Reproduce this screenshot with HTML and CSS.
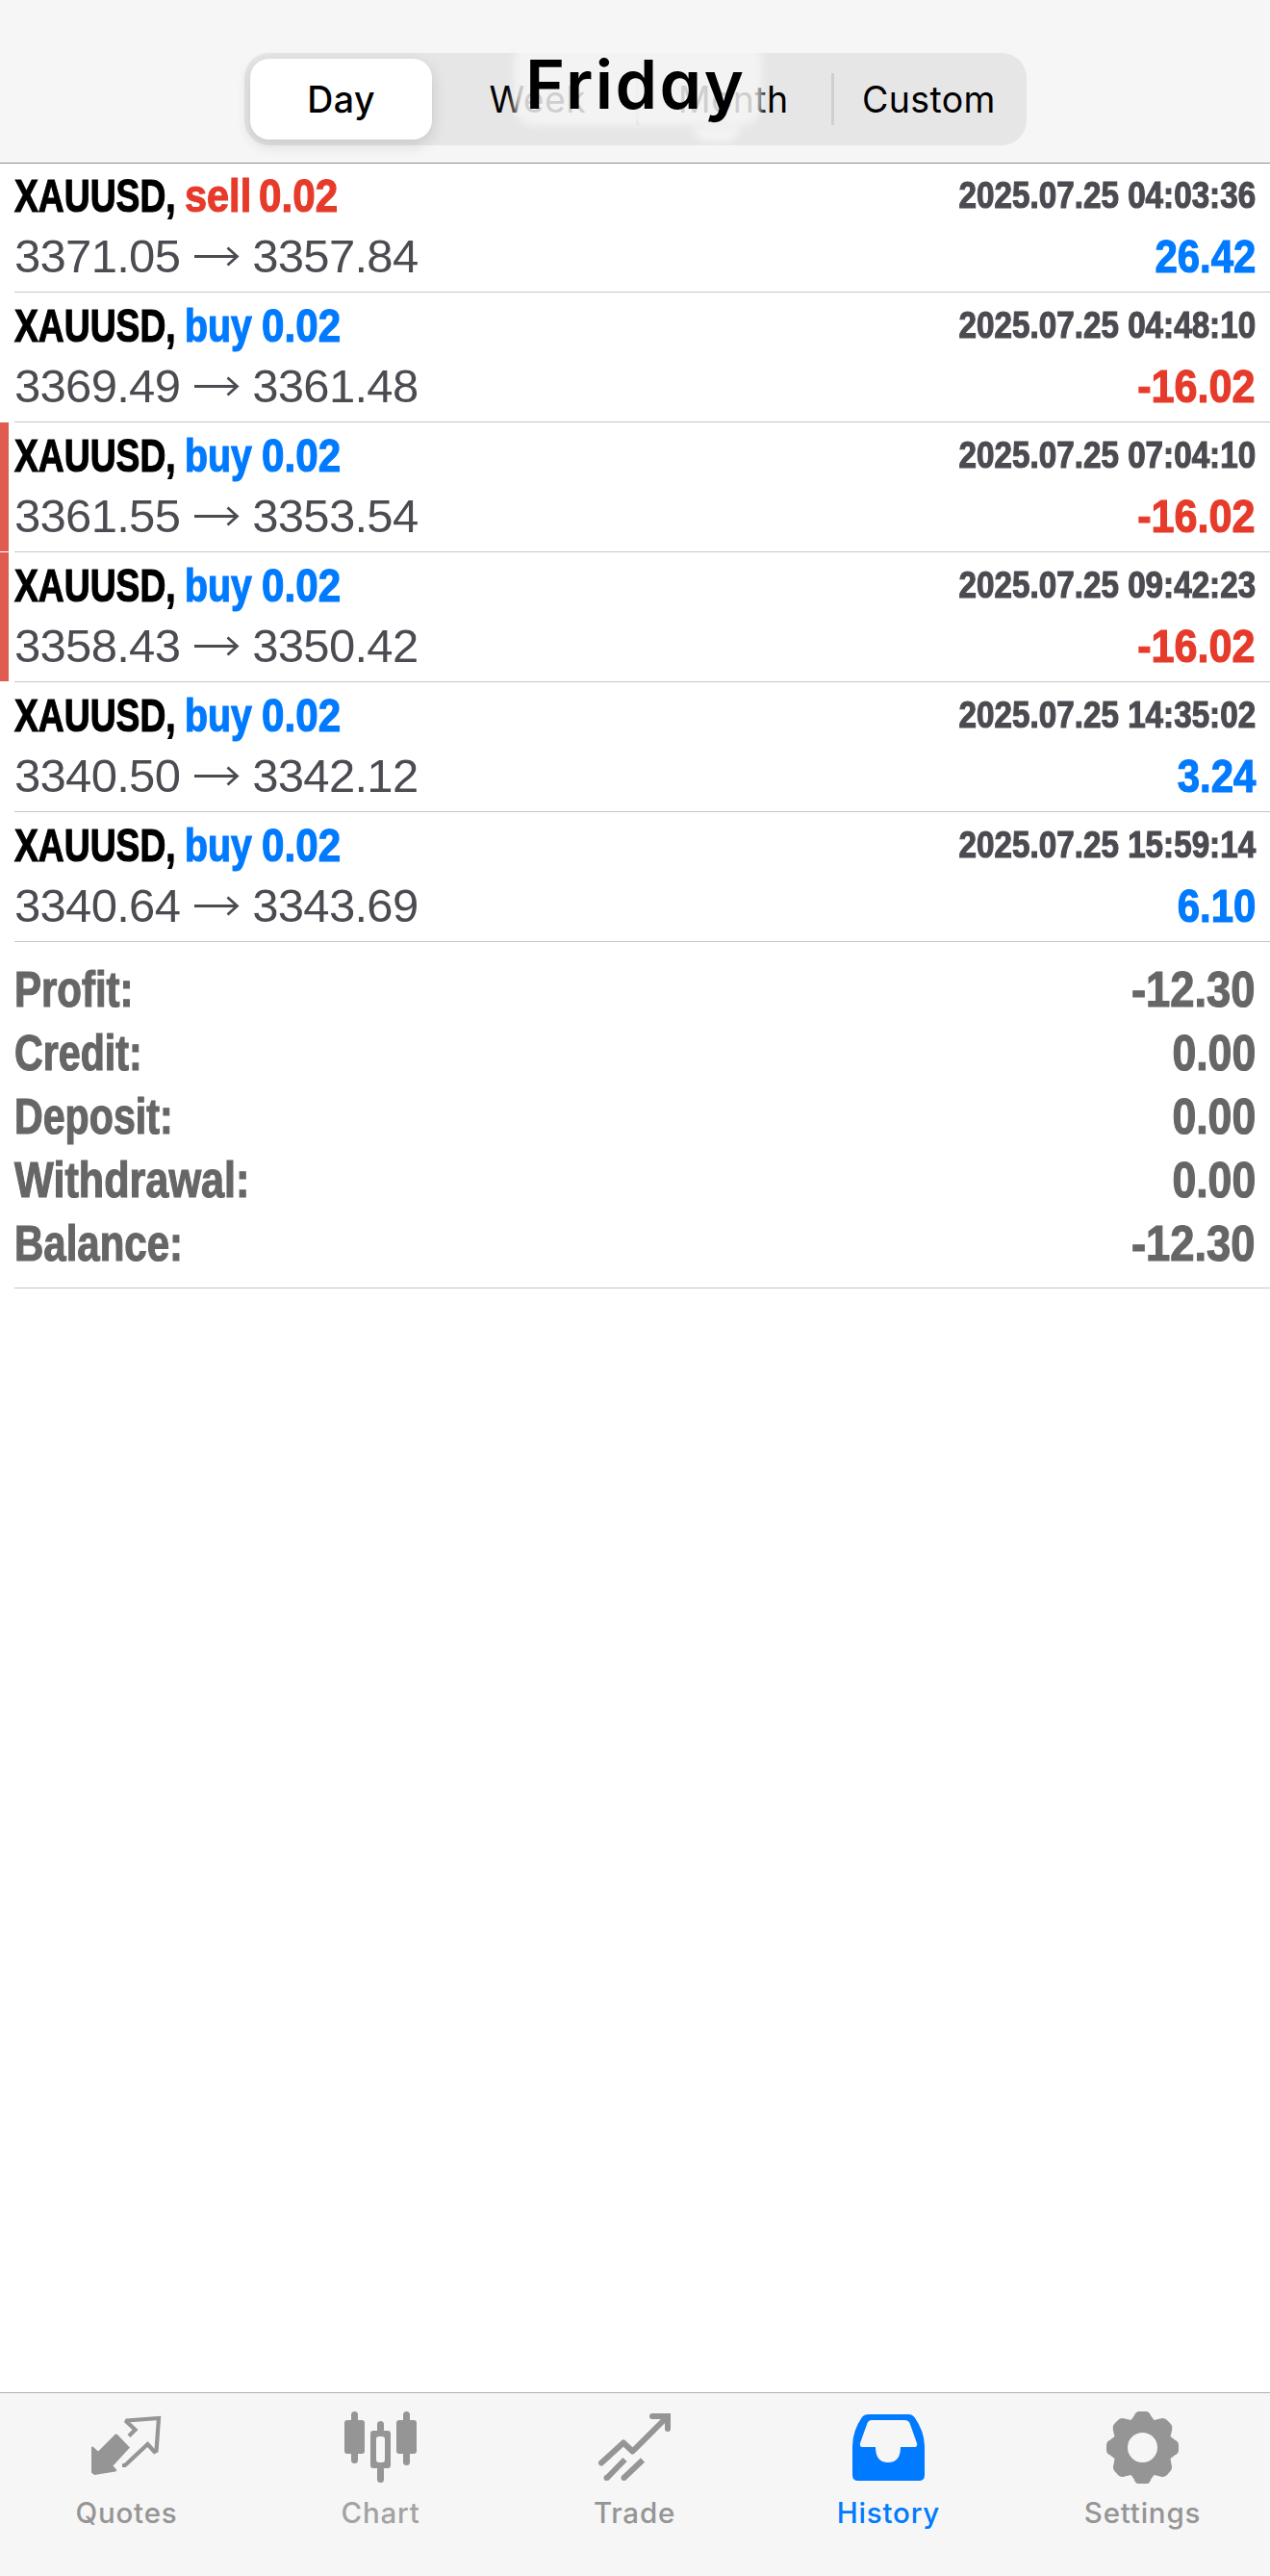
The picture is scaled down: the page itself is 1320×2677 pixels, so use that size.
FILE: index.html
```html
<!DOCTYPE html>
<html lang="en">
<head>
<meta charset="utf-8">
<title>History</title>
<link rel="stylesheet" href="styles.css">
</head>
<body>
<svg width="0" height="0" class="defs" aria-hidden="true">
  <symbol id="arrow" viewBox="0 0 48 24"><path d="M1 12.500H45M35.500 3.500L45.500 12.500L35.500 21.500" fill="none" stroke="currentColor" stroke-width="2.800"/></symbol>
</svg>
<div class="app">
  <header class="header">
    <nav class="segments">
      <span class="segment selected">Day</span>
      <span class="segment week">Week</span>
      <span class="segment divided month">Month</span>
      <span class="segment divided">Custom</span>
    </nav>
    <div class="halo"></div>
    <div class="halo halo-tail"></div>
    <h1 class="title">Friday</h1>
  </header>

  <main class="content">
    <section class="deals">
      <article class="deal">
        <div class="marker"></div>
        <div class="body">
          <div class="line top"><div class="name"><span class="symbol">XAUUSD,</span><span class="side sell">sell</span><span class="volume sell">0.02</span></div><time class="time">2025.07.25 04:03:36</time></div>
          <div class="line bottom"><div class="prices"><span>3371.05</span><svg class="arrow"><use href="#arrow"/></svg><span>3357.84</span></div><span class="result gain">26.42</span></div>
        </div>
      </article>
      <article class="deal">
        <div class="marker"></div>
        <div class="body">
          <div class="line top"><div class="name"><span class="symbol">XAUUSD,</span><span class="side buy">buy</span><span class="volume buy">0.02</span></div><time class="time">2025.07.25 04:48:10</time></div>
          <div class="line bottom"><div class="prices"><span>3369.49</span><svg class="arrow"><use href="#arrow"/></svg><span>3361.48</span></div><span class="result loss">-16.02</span></div>
        </div>
      </article>
      <article class="deal stopped">
        <div class="marker"></div>
        <div class="body">
          <div class="line top"><div class="name"><span class="symbol">XAUUSD,</span><span class="side buy">buy</span><span class="volume buy">0.02</span></div><time class="time">2025.07.25 07:04:10</time></div>
          <div class="line bottom"><div class="prices"><span>3361.55</span><svg class="arrow"><use href="#arrow"/></svg><span>3353.54</span></div><span class="result loss">-16.02</span></div>
        </div>
      </article>
      <article class="deal stopped">
        <div class="marker"></div>
        <div class="body">
          <div class="line top"><div class="name"><span class="symbol">XAUUSD,</span><span class="side buy">buy</span><span class="volume buy">0.02</span></div><time class="time">2025.07.25 09:42:23</time></div>
          <div class="line bottom"><div class="prices"><span>3358.43</span><svg class="arrow"><use href="#arrow"/></svg><span>3350.42</span></div><span class="result loss">-16.02</span></div>
        </div>
      </article>
      <article class="deal">
        <div class="marker"></div>
        <div class="body">
          <div class="line top"><div class="name"><span class="symbol">XAUUSD,</span><span class="side buy">buy</span><span class="volume buy">0.02</span></div><time class="time">2025.07.25 14:35:02</time></div>
          <div class="line bottom"><div class="prices"><span>3340.50</span><svg class="arrow"><use href="#arrow"/></svg><span>3342.12</span></div><span class="result gain">3.24</span></div>
        </div>
      </article>
      <article class="deal">
        <div class="marker"></div>
        <div class="body">
          <div class="line top"><div class="name"><span class="symbol">XAUUSD,</span><span class="side buy">buy</span><span class="volume buy">0.02</span></div><time class="time">2025.07.25 15:59:14</time></div>
          <div class="line bottom"><div class="prices"><span>3340.64</span><svg class="arrow"><use href="#arrow"/></svg><span>3343.69</span></div><span class="result gain">6.10</span></div>
        </div>
      </article>
    </section>

    <dl class="summary">
      <div class="total"><dt>Profit:</dt><dd class="signed">-12.30</dd></div>
      <div class="total"><dt class="credit">Credit:</dt><dd>0.00</dd></div>
      <div class="total"><dt class="credit">Deposit:</dt><dd>0.00</dd></div>
      <div class="total"><dt class="withdrawal">Withdrawal:</dt><dd>0.00</dd></div>
      <div class="total"><dt>Balance:</dt><dd class="signed">-12.30</dd></div>
    </dl>
  </main>

  <nav class="tabs">
    <a class="tab">
      <svg class="icon" viewBox="0 0 84 84">
        <path d="M32.500 24.500L45 37.500L27.500 56.500L31.500 61L30 62.500L8 66L5 63.500V37L6.500 36.500L12 41.500L29 24.500Q30.500 22.500 32.500 24.500Z" fill="currentColor"/>
        <path d="M44 25.500L50.500 19L41.500 10.500L42 9.500L75 7L72.500 41L70.500 42L63.500 34L40 56H37" fill="none" stroke="currentColor" stroke-width="4.200"/>
      </svg>
      <span class="label">Quotes</span>
    </a>
    <a class="tab">
      <svg class="icon" viewBox="0 0 84 84">
        <g fill="currentColor"><rect x="4" y="9" width="21" height="35" rx="3"/><rect x="11" y="0" width="7" height="54" rx="3.500"/>
        <rect x="58" y="9" width="21" height="35" rx="3"/><rect x="65" y="0" width="7" height="56" rx="3.500"/>
        <rect x="38" y="10" width="7" height="12" rx="3.500"/><rect x="38" y="57" width="7" height="17" rx="3.500"/>
        <path fill-rule="evenodd" d="M34 20H49Q52 20 52 23V56Q52 59 49 59H34Q31 59 31 56V23Q31 20 34 20ZM40 26Q37 26 37 29V50Q37 53 40 53H43Q46 53 46 50V29Q46 26 43 26Z"/></g>
      </svg>
      <span class="label muted">Chart</span>
    </a>
    <a class="tab">
      <svg class="icon" viewBox="0 0 84 84">
        <g fill="none" stroke="currentColor" stroke-width="6"><path d="M7 53.500L30 32.500L39.500 41.500L74 7M60 5H76V18" stroke-linecap="round" stroke-linejoin="round"/><path d="M31.500 50L12.500 69.500M50 50.500L30.500 69"/></g>
        <g fill="currentColor"><path d="M71 2H79V10Z"/><circle cx="12.500" cy="69" r="3"/><circle cx="30.500" cy="69" r="3"/></g>
      </svg>
      <span class="label">Trade</span>
    </a>
    <a class="tab active">
      <svg class="icon" viewBox="0 0 84 84">
        <path fill="currentColor" fill-rule="evenodd" d="M21 3H63Q66 3 68.500 6Q79 21 79 37V66Q79 72 73 72H10Q4 72 4 66V37Q4 20 14 6Q16 3 21 3ZM24 9Q21 9 19.500 12L12 33Q11 37 15 37H28Q28 53 41 53Q54 53 54 37H68Q72 37 71 33L63.500 12Q62 9 58 9Z"/>
      </svg>
      <span class="label">History</span>
    </a>
    <a class="tab">
      <svg class="icon" viewBox="0 0 84 84">
        <path fill="currentColor" fill-rule="evenodd" d="M37 0H46Q49 1 50.500 5L53.500 9L60 7.500Q64 6 67 9L70.500 12.500Q73 15 72 20L70.500 26L75 29.500Q79 31 79 35V40Q79 44 75 45.500L70.500 49L71.500 55Q73 60 70.500 62L67 66Q64 69 60 67.500L53.500 66L50.500 70Q49 75 46 75H37Q34 75 32.500 70L29.500 66L23 67.500Q19 69 16 66L12.500 62Q10 60 11.500 55L12.500 49L8 45.500Q4 44 4 40V35Q4 31 8 29.500L12.500 26L11 20Q10 15 12.500 12.500L16 9Q19 6 23 7.500L29.500 9L32.500 5Q34 1 37 0ZM57 37.500A15.500 15.500 0 1 0 26 37.500A15.500 15.500 0 1 0 57 37.500Z"/>
      </svg>
      <span class="label">Settings</span>
    </a>
  </nav>
</div>
</body>
</html>
```

FILE: styles.css
```css
* { box-sizing: border-box; }

body {
  margin: 0;
  background: #fff;
  font-family: "Liberation Sans", Arial, sans-serif;
}

.defs { position: absolute; }

.app {
  display: flex;
  flex-direction: column;
  width: 1320px;
  height: 2677px;
  overflow: hidden;
}

/* Header */
.header {
  position: relative;
  height: 170px;
  flex: none;
  padding: 55px 253px 0 254px;
  background: #f6f6f6;
  border-bottom: 1px solid #8e8e8f;
  font-family: Inter, sans-serif;
}

.segments {
  display: grid;
  grid-template-columns: repeat(4, 1fr);
  height: 96px;
  padding: 6px 0;
  border-radius: 26px;
  background: #e6e6e6;
}

.segment {
  display: flex;
  align-items: center;
  justify-content: center;
  font-size: 37.5px;
  letter-spacing: 0.4px;
  color: #000;
}

.selected {
  margin: 0 8px 0 6px;
  border-radius: 20px;
  background: #fff;
  box-shadow: 0 5px 16px rgba(0, 0, 0, 0.14);
  font-weight: 500;
}

.divided {
  background: linear-gradient(#cfcfd0, #cfcfd0) left 15px / 3px 54px no-repeat;
}

/* Soft patches that fade the control behind the title */
.halo {
  position: absolute;
  left: 534px;
  top: 42px;
  width: 258px;
  height: 89px;
  border-radius: 22px;
  background: rgba(246, 246, 246, 0.84);
  filter: blur(4px);
}

.halo-tail {
  left: 720px;
  top: 131px;
  width: 50px;
  height: 17px;
  border-radius: 0 0 20px 20px;
}

.title {
  position: absolute;
  left: 546px;
  top: 45px;
  margin: 0;
  font-size: 70px;
  line-height: 86px;
  font-weight: 600;
  letter-spacing: 2.4px;
  font-feature-settings: "cv11", "ss03";
  color: #000;
}

/* Deals */
.content { flex: 1; }

.deal {
  display: grid;
  grid-template-columns: 15px 1fr;
  height: 135px;
}

.stopped .marker {
  width: 9px;
  height: 134px;
  background: #e05c50;
}

.body {
  display: flex;
  flex-direction: column;
  justify-content: flex-end;
  padding: 0 15px 8px 0;
  border-bottom: 1px solid #c6c6c8;
}

.line {
  display: flex;
  justify-content: space-between;
  white-space: nowrap;
}

.top { height: 68px; line-height: 68px; }
.bottom { height: 58px; line-height: 58px; }

.deal:first-child { height: 134px; }
.deal:first-child .top { height: 67px; line-height: 66px; }
.deal:first-child .time { line-height: 65px; }

.name { display: flex; }

.symbol, .side, .volume, .time, .result, .total dt, .total dd {
  font-weight: 700;
  transform-origin: left center;
  -webkit-text-stroke: 1.2px currentColor;
}

.symbol, .side, .volume, .result { font-size: 48.5px; }

.symbol { width: 177px; transform: scaleX(0.768); color: #000; }
.side { width: 80px; transform: scaleX(0.81); }
.side.sell { width: 77px; transform: scaleX(0.855); }
.volume { transform: scaleX(0.87); }

.buy, .gain { color: #007aff; }
.sell, .loss { color: #e63b2a; }

.time {
  font-size: 39px;
  line-height: 67px;
  transform: scaleX(0.852);
  transform-origin: right center;
  color: #4b4b51;
}

.result { transform: scaleX(0.865); transform-origin: right center; }
.result.loss { transform: scaleX(0.89); }

.prices {
  display: flex;
  align-items: center;
  font-size: 49px;
  letter-spacing: -0.7px;
  color: #4b4b51;
}

.arrow { width: 48px; height: 24px; margin: 0 13px 0 14px; }

/* Totals */
.summary {
  margin: 0 0 0 15px;
  padding: 17px 15px 12px 0;
  height: 360px;
  border-bottom: 1px solid #c6c6c8;
  font-size: 51px;
  line-height: 66px;
  color: #666;
}

.total {
  display: flex;
  justify-content: space-between;
  height: 66px;
}

.total dt { transform: scaleX(0.823); }
.total dt.credit { transform: scaleX(0.807); }
.total dt.withdrawal { transform: scaleX(0.847); }

.total dd {
  margin: 0;
  transform: scaleX(0.875);
  transform-origin: right center;
}

.total dd.signed { transform: scaleX(0.89); }

/* Tab bar */
.tabs {
  display: grid;
  grid-template-columns: repeat(5, 264px);
  height: 191px;
  border-top: 1px solid #b1b1b2;
  background: #f6f6f6;
  font-family: Inter, sans-serif;
}

.tab {
  display: flex;
  flex-direction: column;
  align-items: center;
  padding: 19px 1px 0 0;
  color: #959595;
}

.active { color: #007aff; }

.icon { width: 84px; height: 84px; }

.label {
  margin-top: 3px;
  font-size: 29.5px;
  line-height: 36px;
  font-weight: 500;
  letter-spacing: 0.8px;
}

.muted { color: #a2a2a2; }
```
